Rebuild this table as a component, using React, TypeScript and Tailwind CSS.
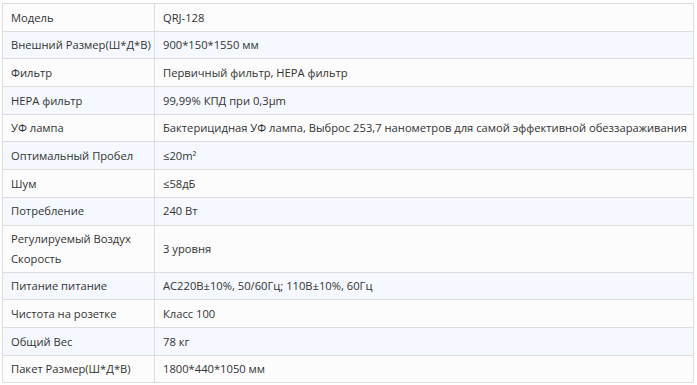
import React from "react";

const rows: [string, string][] = [
  ["Модель", "QRJ-128"],
  ["Внешний Размер(Ш*Д*В)", "900*150*1550 мм"],
  ["Фильтр", "Первичный фильтр, HEPA фильтр"],
  ["HEPA фильтр", "99,99% КПД при 0,3μm"],
  ["УФ лампа", "Бактерицидная УФ лампа, Выброс 253,7 нанометров для самой эффективной обеззараживания"],
  ["Оптимальный Пробел", "≤20m²"],
  ["Шум", "≤58дБ"],
  ["Потребление", "240 Вт"],
  ["Регулируемый Воздух Скорость", "3 уровня"],
  ["Питание питание", "AC220В±10%, 50/60Гц; 110В±10%, 60Гц"],
  ["Чистота на розетке", "Класс 100"],
  ["Общий Вес", "78 кг"],
  ["Пакет Размер(Ш*Д*В)", "1800*440*1050 мм"],
];

export default function App() {
  return (
    <div className="w-[697px] h-[385px] bg-white pl-[2px] pt-[3px]" style={{ fontFamily: '"Open Sans", "Noto Sans", sans-serif' }}>
      <table className="w-[692px] table-fixed border-collapse text-[11.2px] leading-[19.5px] text-[#333]">
        <colgroup>
          <col className="w-[152px]" />
          <col />
        </colgroup>
        <tbody>
          {rows.map(([k, v], i) => (
            <tr key={i} className={i % 2 === 0 ? "bg-[#fcfcfc]" : "bg-[#f5f9ff]"}>
              <td className="border border-[#dddddd] px-[8px] py-[3.6px] align-middle">
                {k === "Регулируемый Воздух Скорость" ? (
                  <>
                    Регулируемый Воздух
                    <br />
                    Скорость
                  </>
                ) : (
                  <span className="whitespace-nowrap">{k}</span>
                )}
              </td>
              <td className="border border-[#dddddd] px-[8px] py-[3.6px] align-middle whitespace-nowrap">{v}</td>
            </tr>
          ))}
        </tbody>
      </table>
    </div>
  );
}
